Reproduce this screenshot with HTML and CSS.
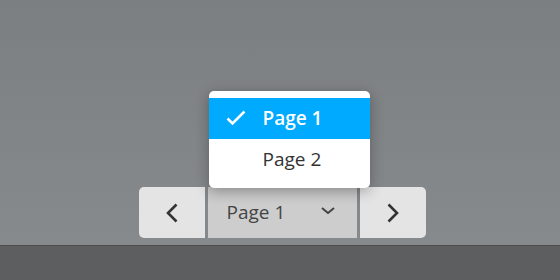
FILE: index.html
```html
<!DOCTYPE html>
<html>
<head>
<title>Pager</title>
<link rel="stylesheet" href="styles.css">
</head>
<body>
<div class="stage">
  <div class="pager">
    <div class="pager-btn prev">
      <svg width="14" height="20" viewBox="0 0 14 20"><path d="M11.5 1.5 L3 10 L11.5 18.5" fill="none" stroke="#333" stroke-width="2.6"/></svg>
    </div>
    <div class="pager-select">
      <span class="current">Page 1</span>
      <svg width="14" height="7" viewBox="0 0 14 7"><path d="M1 1 L7 6 L13 1" fill="none" stroke="#444" stroke-width="2"/></svg>
      <div class="menu">
        <div class="menu-item selected">
          <svg class="check" width="20" height="16" viewBox="0 0 20 16"><path d="M1.5 8.5 L6.5 13.5 L18.5 1.5" fill="none" stroke="#fff" stroke-width="2.6"/></svg>
          Page 1
        </div>
        <div class="menu-item">Page 2</div>
      </div>
    </div>
    <div class="pager-btn next">
      <svg width="14" height="20" viewBox="0 0 14 20"><path d="M2.5 1.5 L11 10 L2.5 18.5" fill="none" stroke="#333" stroke-width="2.6"/></svg>
    </div>
  </div>
</div>
<div class="footer"></div>
</body>
</html>
```

FILE: styles.css
```css
html, body {
margin: 0;
height: 100%;
}
body {
font-family: "Open Sans", sans-serif;
display: flex;
flex-direction: column;
background: #5d5e60;
}
.stage {
height: 245px;
background: linear-gradient(#7c7f82, #878a8d);
display: flex;
align-items: flex-end;
justify-content: center;
}
.pager {
display: flex;
gap: 3px;
margin: 0 0 7px 4px;
}
.pager-btn {
width: 66px;
height: 51px;
background: #e4e4e4;
display: flex;
align-items: center;
justify-content: center;
}
.prev {
border-radius: 5px 0 0 5px;
}
.next {
border-radius: 0 5px 5px 0;
}
.pager-select {
position: relative;
width: 149px;
height: 51px;
box-sizing: border-box;
padding: 0 22px 0 19px;
background: linear-gradient(#c4c4c4, #cdcdcd 30%, #cdcdcd);
display: flex;
align-items: center;
justify-content: space-between;
color: #444;
font-size: 19px;
}
.current {
margin-bottom: 2px;
}
.pager-select svg {
margin-bottom: 5px;
}
.menu {
position: absolute;
left: 1px;
bottom: 50px;
width: 161px;
padding: 7px 0 8px;
background: #fff;
border-radius: 5px;
box-shadow: 0 3px 14px rgba(0, 0, 0, 0.3);
}
.menu-item {
position: relative;
height: 41px;
line-height: 40px;
padding-left: 54px;
color: #333;
font-size: 19px;
}
.menu-item.selected {
background: #00aaff;
color: #fff;
font-weight: 600;
}
.check {
position: absolute;
left: 17px;
top: 12px;
}
.footer {
flex: 1;
border-top: 1px solid #4c4d4f;
}
```
